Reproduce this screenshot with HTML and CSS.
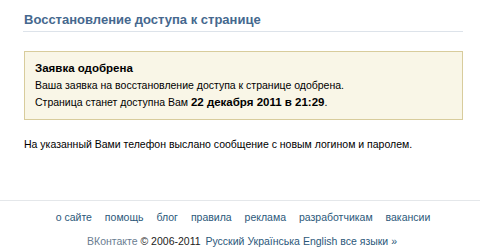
FILE: index.html
```html
<!DOCTYPE html>
<html lang="ru">
<head>
    <meta charset="UTF-8">
    <title>Восстановление доступа к странице</title>
    <link rel="stylesheet" href="styles.css">
</head>
<body>
    <div class="page">
        <h1 class="page-title">Восстановление доступа к странице</h1>

        <div class="msg">
            <div class="msg-title">Заявка одобрена</div>
            <div class="msg-line">Ваша заявка на восстановление доступа к странице одобрена.</div>
            <div class="msg-line">Страница станет доступна Вам <b>22 декабря 2011 в 21:29</b>.</div>
        </div>

        <p class="note">На указанный Вами телефон выслано сообщение с новым логином и паролем.</p>
    </div>

    <div class="footer">
        <div class="footer-links">
            <a href="#">о сайте</a>
            <a href="#">помощь</a>
            <a href="#">блог</a>
            <a href="#">правила</a>
            <a href="#">реклама</a>
            <a href="#">разработчикам</a>
            <a href="#">вакансии</a>
        </div>
        <div class="footer-copy">
            <span class="brand">ВКонтакте</span>
            <span class="copy">&copy; 2006-2011</span>
            <a href="#">Русский</a>
            <a href="#">Українська</a>
            <a href="#">English</a>
            <a href="#">все языки &raquo;</a>
        </div>
    </div>
</body>
</html>
```

FILE: styles.css
```css
body {
    margin: 0;
    padding: 0;
    background-color: #fff;
    font-family: "Liberation Sans", Tahoma, sans-serif;
    font-size: 10.5px;
    color: #000;
}

.page {
    width: 440px;
    margin: 0 0 0 23px;
    padding-top: 13px;
}

.page-title {
    margin: 0;
    padding: 0 0 4px 1px;
    font-size: 13px;
    line-height: 14px;
    font-weight: bold;
    color: #45688e;
    border-bottom: 1px solid #dde3ea;
}

.msg {
    margin: 19px 0 0 1px;
    padding: 8px 10px 8px;
    background-color: #f9f6e7;
    border: 1px solid #d8cc9c;
}

.msg-title {
    font-weight: bold;
    font-size: 11.5px;
    line-height: 17px;
}

.msg-line {
    line-height: 17px;
}

.msg-line b {
    font-size: 11.5px;
}

.note {
    margin: 16px 0 0 1px;
    line-height: 17px;
}

.footer {
    margin-top: 47px;
    border-top: 1px solid #e4e7ea;
    text-align: center;
    padding-top: 8px;
}

.footer a {
    color: #2b587a;
    text-decoration: none;
}

.footer-links a {
    margin: 0 5px;
}

.footer-links {
    padding-left: 6px;
    line-height: 17px;
}

.footer-copy {
    margin-top: 7px;
    padding-left: 4px;
    line-height: 17px;
}

.brand {
    color: #6a7d91;
}

.copy {
    color: #222;
    margin-right: 2px;
}
```
